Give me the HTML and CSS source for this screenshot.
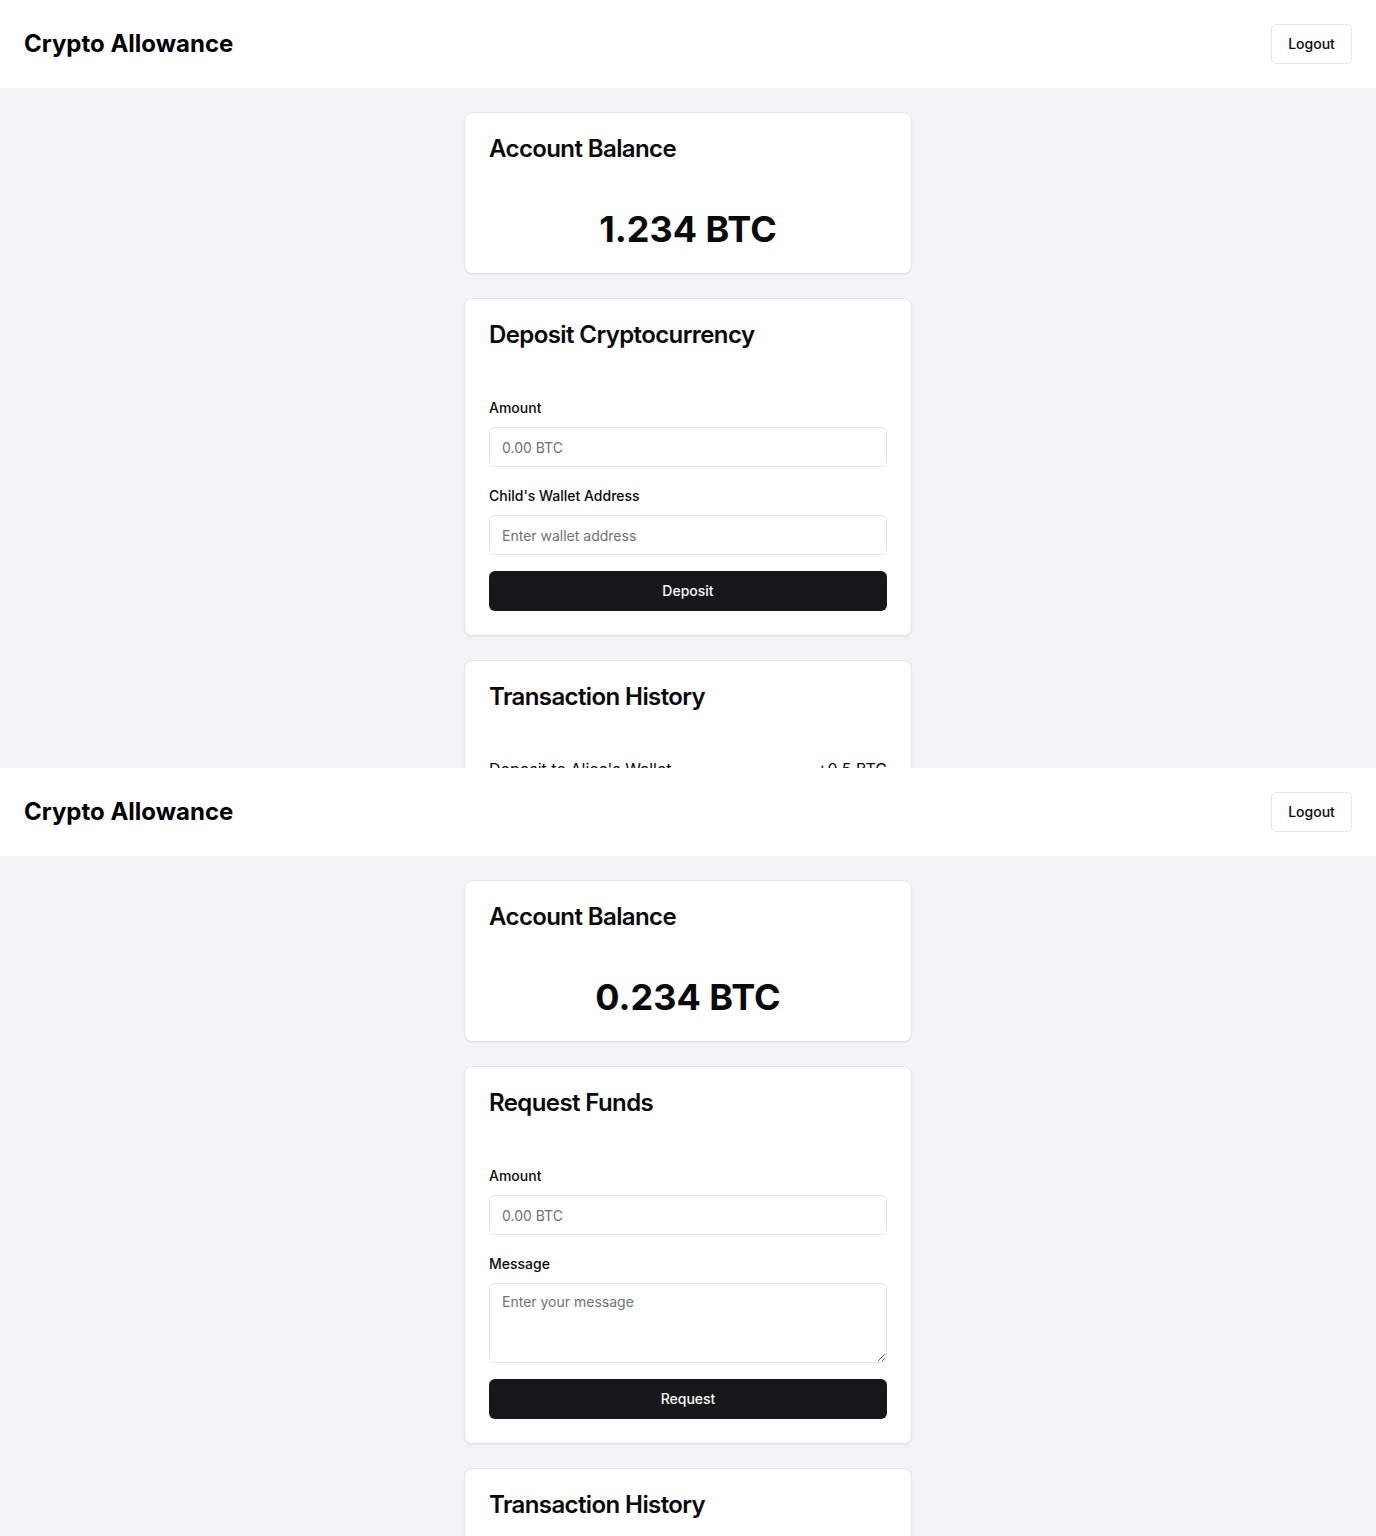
FILE: index.html
```html
<!DOCTYPE html>
<html lang="en">
<head>
<meta charset="utf-8">
<title>Crypto Allowance</title>
<link rel="stylesheet" href="styles.css">
</head>
<body>
<div class="screen">
  <header class="topbar">
    <h1 class="brand">Crypto Allowance</h1>
    <button class="btn-outline" type="button">Logout</button>
  </header>
  <main class="content">
    <section class="card">
      <h2 class="card-title">Account Balance</h2>
      <div class="balance">1.234 BTC</div>
    </section>
    <section class="card">
      <h2 class="card-title">Deposit Cryptocurrency</h2>
      <form class="form">
        <div class="field">
          <label class="label" for="amt1">Amount</label>
          <input class="input" id="amt1" type="text" placeholder="0.00 BTC">
        </div>
        <div class="field">
          <label class="label" for="wallet">Child's Wallet Address</label>
          <input class="input" id="wallet" type="text" placeholder="Enter wallet address">
        </div>
        <button class="btn-primary" type="button">Deposit</button>
      </form>
    </section>
    <section class="card">
      <h2 class="card-title">Transaction History</h2>
      <ul class="tx-list">
        <li class="tx"><span>Deposit to Alice's Wallet</span><span>+0.5 BTC</span></li>
        <li class="tx"><span>Deposit to Bob's Wallet</span><span>+0.25 BTC</span></li>
      </ul>
    </section>
  </main>
</div>
<div class="screen">
  <header class="topbar">
    <h1 class="brand">Crypto Allowance</h1>
    <button class="btn-outline" type="button">Logout</button>
  </header>
  <main class="content">
    <section class="card">
      <h2 class="card-title">Account Balance</h2>
      <div class="balance">0.234 BTC</div>
    </section>
    <section class="card">
      <h2 class="card-title">Request Funds</h2>
      <form class="form">
        <div class="field">
          <label class="label" for="amt2">Amount</label>
          <input class="input" id="amt2" type="text" placeholder="0.00 BTC">
        </div>
        <div class="field">
          <label class="label" for="msg">Message</label>
          <textarea class="input textarea" id="msg" placeholder="Enter your message"></textarea>
        </div>
        <button class="btn-primary" type="button">Request</button>
      </form>
    </section>
    <section class="card">
      <h2 class="card-title">Transaction History</h2>
      <ul class="tx-list">
        <li class="tx"><span>Received from Parent</span><span>+0.5 BTC</span></li>
      </ul>
    </section>
  </main>
</div>
</body>
</html>
```
FILE: styles.css
```css
* { box-sizing: border-box; }
html, body { margin: 0; padding: 0; }
body {
  font-family: Inter, "Liberation Sans", sans-serif;
  color: #09090b;
  background: #f3f4f6;
}
.screen {
  height: 768px;
  overflow: hidden;
  background: #f3f4f6;
}
.topbar {
  height: 88px;
  background: #ffffff;
  display: flex;
  align-items: center;
  justify-content: space-between;
  padding: 0 24px;
}
.brand {
  margin: 0;
  font-size: 24px;
  line-height: 32px;
  font-weight: 700;
  color: #000;
}
.btn-outline {
  height: 40px;
  width: 81px;
  padding: 0 16px 1px;
  font-family: inherit;
  font-size: 14px;
  font-weight: 500;
  color: #09090b;
  background: #fff;
  border: 1px solid #e4e4e7;
  border-radius: 6px;
}
.content {
  display: flex;
  flex-direction: column;
  align-items: center;
  gap: 24px;
  padding-top: 24px;
}
.card {
  width: 448px;
  background: #fff;
  border: 1px solid #e4e4e7;
  border-radius: 8px;
  box-shadow: 0 1px 2px rgba(0,0,0,0.05);
  padding: 24px;
}
.card-title {
  margin: 0;
  font-size: 24px;
  line-height: 24px;
  font-weight: 600;
  letter-spacing: -0.6px;
}
.balance {
  margin-top: 48px;
  text-align: center;
  font-size: 36px;
  line-height: 40px;
  font-weight: 700;
}
.form {
  margin: 51px 0 0;
  display: flex;
  flex-direction: column;
}
.field {
  display: flex;
  flex-direction: column;
  margin-bottom: 19px;
}
.field + .btn-primary { margin-top: -3px; }
.label {
  font-size: 14px;
  line-height: 20px;
  font-weight: 500;
  margin-bottom: 9px;
}
.input {
  height: 40px;
  width: 100%;
  border: 1px solid #e4e4e7;
  border-radius: 6px;
  padding: 8px 12px;
  font-family: inherit;
  font-size: 14px;
  color: #09090b;
  background: #fff;
}
.input::placeholder { color: #71717a; }
.textarea {
  height: 80px;
  resize: vertical;
  line-height: 20px;
}
.btn-primary {
  height: 40px;
  width: 100%;
  border: none;
  border-radius: 6px;
  padding: 0 16px 1px;
  background: #18181b;
  color: #fafafa;
  font-family: inherit;
  font-size: 14px;
  font-weight: 500;
}
.tx-list {
  list-style: none;
  margin: 48px 0 0;
  padding: 0;
}
.tx {
  display: flex;
  justify-content: space-between;
  font-size: 16px;
  line-height: 24px;
  padding-bottom: 12px;
}
```
